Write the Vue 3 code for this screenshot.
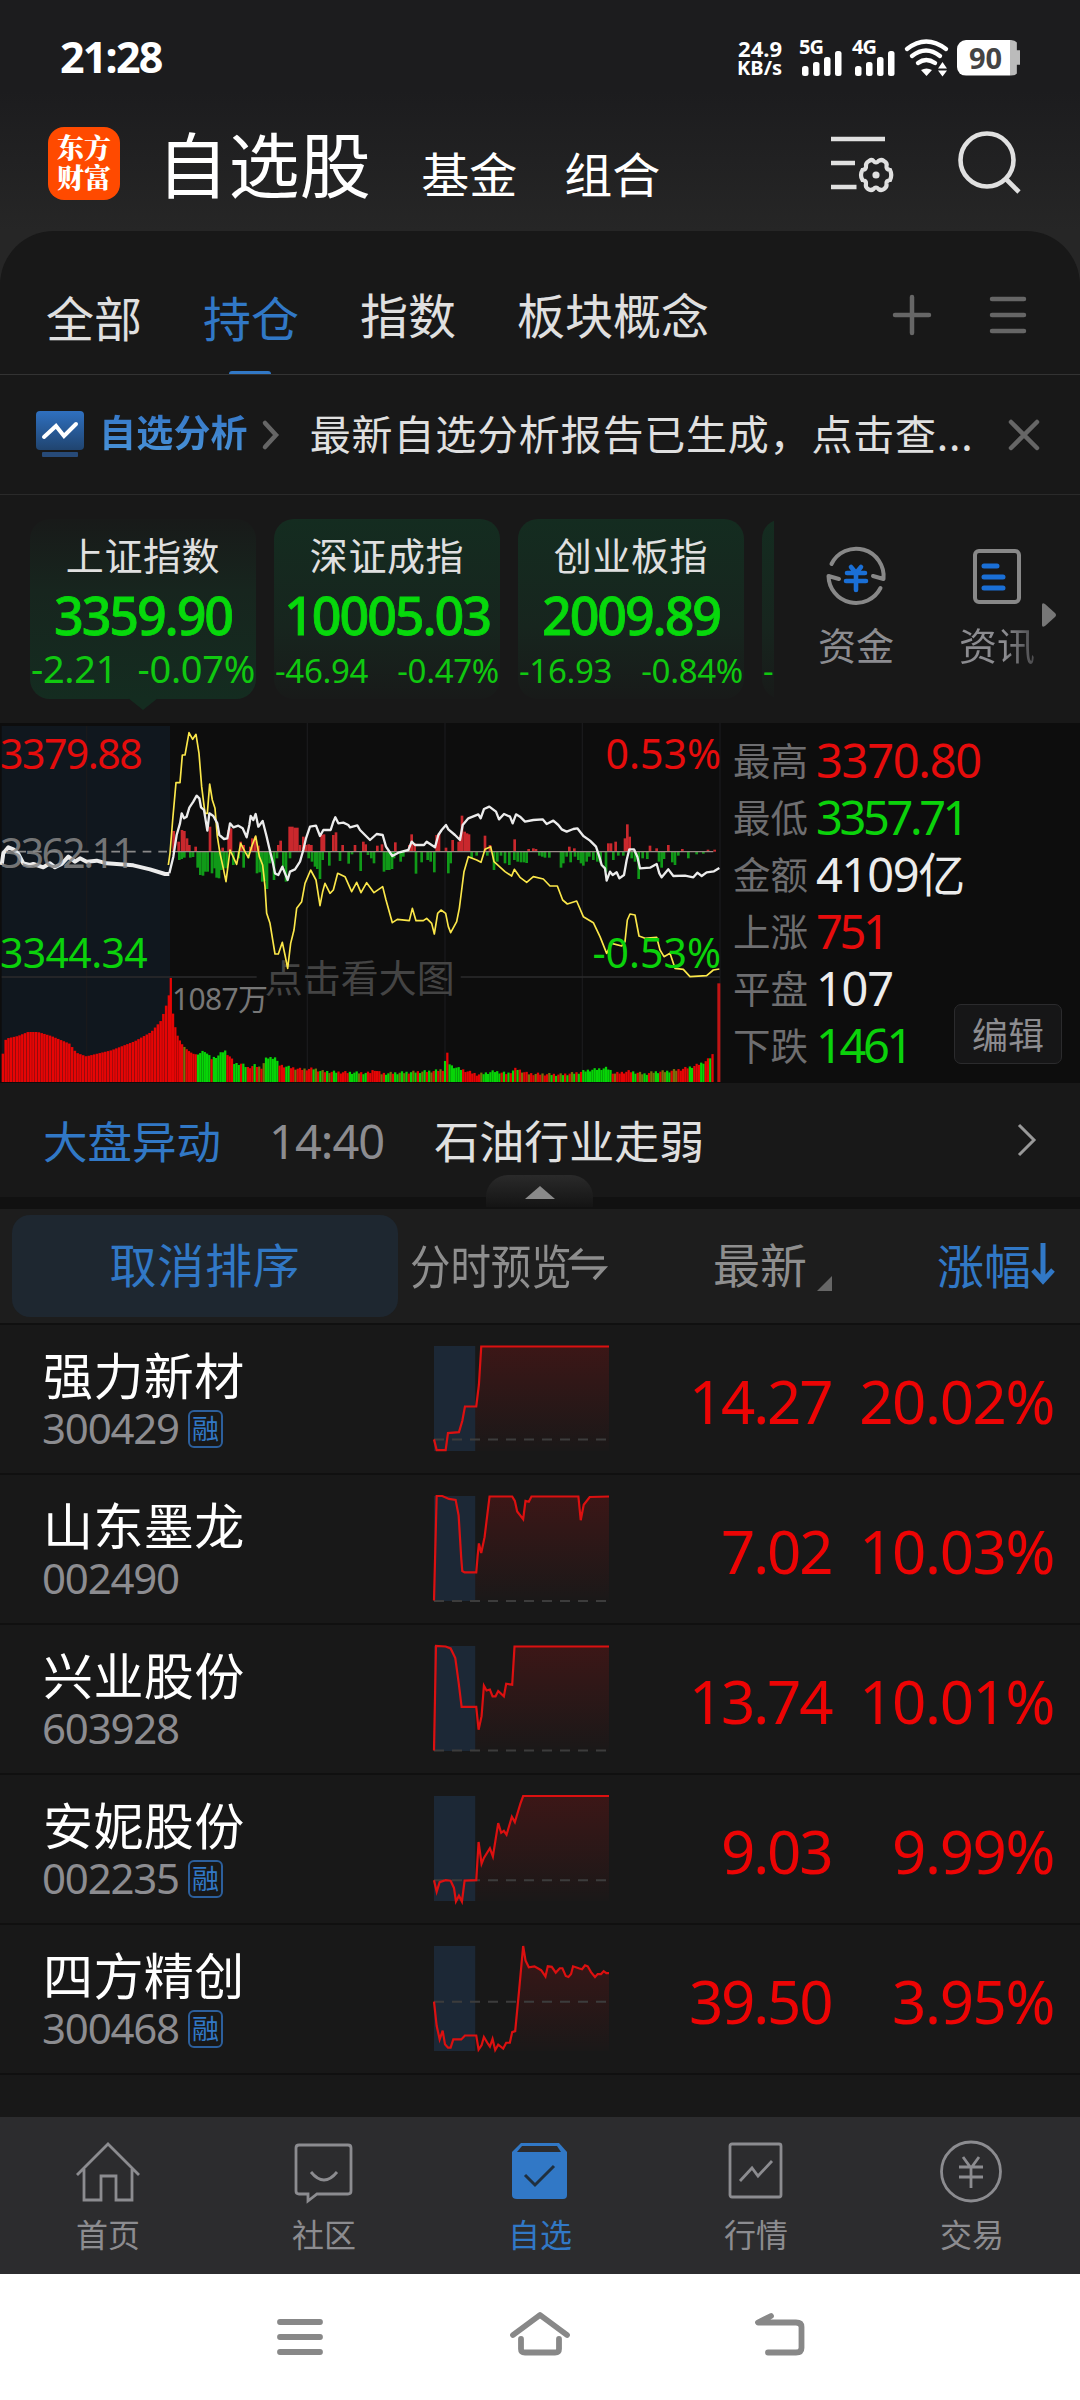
<template>
    <div class="page">
        <div class="top">
            <div class="status">
                <b class="time">21:28</b>
                <div class="speed"><span>24.9</span><span>KB/s</span></div>
                <svg v-for="g in ['5G', '4G']" :key="g" class="signal" width="44" height="38" viewBox="0 0 44 38">
                    <text x="-1" y="15" class="net">{{ g }}</text>
                    <rect x="2" y="27" width="6.5" height="10" rx="2.5" />
                    <rect x="13" y="23" width="6.5" height="14" rx="2.5" />
                    <rect x="24" y="18" width="6.5" height="19" rx="2.5" />
                    <rect x="35" y="12" width="6.5" height="25" rx="2.5" />
                </svg>
                <svg class="wifi" width="46" height="38" viewBox="0 0 46 38">
                    <g fill="none" stroke="#fff" stroke-width="4.4" stroke-linecap="round">
                        <path d="M3 10Q22 -5 42 10" />
                        <path d="M8 17Q22 6 36 17" />
                        <path d="M14 24Q22 18 31 24" />
                    </g>
                    <path d="M17 31Q22.500 28 28 31L22.500 37Z" fill="#fff" />
                    <path d="M34 29.500L38.500 23L43 29.500ZM34 31.500L38.500 37.500L43 31.500Z" fill="#fff" />
                </svg>
                <div class="battery"><b>90</b></div>
            </div>
            <div class="header">
                <div class="logo"><span>东方</span><span>财富</span></div>
                <span class="title">自选股</span>
                <span class="sub">基金</span>
                <span class="sub">组合</span>
                <svg class="setting" width="64" height="60" viewBox="0 0 64 60" fill="none" stroke="#e0e0e0">
                    <path d="M0 5H54M0 29H24M0 53H25.500" stroke-width="4.600" />
                    <path
                        d="M38 27Q41 25 42.500 27Q45 30 47.500 27Q50 25 53 27Q56.500 29 55.500 32Q55 35.500 59 36Q61.500 41 59 46Q55 46.500 55.500 50Q56 53 53 55Q50 57 47.500 55Q45 52 42.500 55Q40 57 37 55Q34 53 35 50Q35.500 46.500 31.500 46Q28.500 41 31.500 36Q35.500 35.500 35 32Q34.500 29 38 27Z"
                        stroke-width="4.200"
                    />
                    <circle cx="45" cy="41" r="3.600" fill="#e0e0e0" stroke="none" />
                </svg>
                <svg class="search" width="64" height="66" viewBox="0 0 64 66" fill="none" stroke="#e0e0e0" stroke-width="4.600">
                    <circle cx="29" cy="30" r="26.500" />
                    <path d="M48 49L61 62" />
                </svg>
            </div>
            <div class="tabs">
                <span
                    v-for="(t, index) in tabs"
                    :key="t"
                    :class="{ on: index == 1, low: index < 2 }"
                    >{{ t }}</span
                >
                <svg class="plus" width="40" height="40" viewBox="0 0 40 40">
                    <path d="M3 20H37M20 2V38" />
                </svg>
                <svg class="lines" width="38" height="38" viewBox="0 0 38 38">
                    <path d="M3 3H35M3 19H35M3 35H35" />
                </svg>
            </div>
        </div>

        <div class="notice">
            <svg width="48" height="48" viewBox="0 0 48 48">
                <defs>
                    <linearGradient id="blue" x1="0" y1="0" x2="0" y2="1">
                        <stop offset="0" stop-color="#2f70c0" />
                        <stop offset="1" stop-color="#20446f" />
                    </linearGradient>
                </defs>
                <rect width="48" height="39" rx="4" fill="url(#blue)" />
                <rect x="6" y="41" width="36" height="5" rx="1" fill="#274a78" />
                <path d="M8 26L20 15L28 25L40 13" fill="none" stroke="#fff" stroke-width="4" stroke-linecap="round" />
            </svg>
            <b>自选分析</b>
            <svg class="arrow" width="18" height="30" viewBox="0 0 18 30">
                <path d="M3 3L14 15L3 27" />
            </svg>
            <p>最新自选分析报告已生成，点击查...</p>
            <svg class="close" width="32" height="32" viewBox="0 0 32 32">
                <path d="M3 3L29 29M29 3L3 29" />
            </svg>
        </div>

        <div class="index">
            <div class="cards">
                <div v-for="(i, index) in indexes" :key="i.name" class="card" :class="{ now: index == 0 }">
                    <span>{{ i.name }}</span>
                    <strong>{{ i.value }}</strong>
                    <div>
                        <em>{{ i.diff }}</em>
                        <em>{{ i.rate }}</em>
                    </div>
                </div>
            </div>
            <div class="entry">
                <svg width="62" height="62" viewBox="0 0 62 62" fill="none" stroke="#888" stroke-width="4" stroke-linecap="round" stroke-linejoin="round">
                    <path d="M6.500 19A27.500 27.500 0 0 1 58.500 34L48 31" />
                    <path d="M55.500 43A27.500 27.500 0 0 1 3.500 31L14 34" />
                    <path d="M26 22L31 28L36 22M22 28H40M21 36H41M31 28V45" stroke="#1a6fd6" stroke-width="4.600" />
                </svg>
                <span>资金</span>
            </div>
            <div class="entry news-entry">
                <svg width="62" height="62" viewBox="0 0 62 62" fill="none" stroke="#888" stroke-width="4" stroke-linecap="round">
                    <rect x="9" y="6" width="44" height="51" rx="4" />
                    <path d="M18 21H31M18 32H37M18 43H37" stroke="#1a6fd6" stroke-width="5" />
                </svg>
                <span>资讯</span>
            </div>
            <svg class="more" width="16" height="26" viewBox="0 0 16 26">
                <path d="M1 3Q1 0 4 2L14 11Q16 13 14 15L4 24Q1 26 1 23Z" fill="#777" />
            </svg>
        </div>

        <div class="market">
            <svg class="chart" width="722" height="360" viewBox="0 39 2166 1080">
                <rect x="5" y="48" width="505" height="1068" fill="#10171e" />
                <g stroke="#19191b" stroke-width="4">
                    <path d="M260 48V1116M922 39V1116M1335 39V1116M1747 39V1116M2160 39V1116" />
                    <path d="M5 801H770M1382 801H2160" stroke="#2b2b2d" />
                </g>
                <path d="M5 425H505" stroke="#8a8a8a" stroke-width="5" stroke-dasharray="26 21" />
                <text x="794" y="846" class="cn" font-size="114" fill="#444">点击看大图</text>
                <rect v-for="b in flow" :key="b.x + b.fill" :x="b.x" :y="b.y" width="8" :height="b.h" :fill="b.fill" />
                <path d="M515 425H2140" stroke="#9a8a88" stroke-width="4" />
                <rect v-for="b in volumes" :key="b.x" :x="b.x" :y="1116 - b.h" :width="b.w" :height="b.h" :fill="b.fill" />
                <polyline :points="yellow" class="yellow" />
                <polyline :points="before" class="before" />
                <polyline :points="white" class="white" />
                <text x="0" y="177" class="tight" fill="#e60c0c">3379.88</text>
                <text x="0" y="473" class="tighter" fill="#868686" fill-opacity="0.850">3362.11</text>
                <text x="0" y="773" class="loose" fill="#0bd20b">3344.34</text>
                <text x="2163" y="177" fill="#e60c0c" text-anchor="end">0.53%</text>
                <text x="2163" y="773" fill="#0bd20b" text-anchor="end">-0.53%</text>
                <text x="516" y="900" class="loose" font-size="90" fill="#777">1087万</text>
            </svg>
            <ul>
                <li v-for="i in stats" :key="i.name">
                    <span>{{ i.name }}</span>
                    <em :class="i.color">{{ i.value }}</em>
                </li>
            </ul>
            <div class="edit">编辑</div>
        </div>

        <div class="news">
            <span class="blue">大盘异动</span>
            <span class="clock">14:40</span>
            <span>石油行业走弱</span>
            <svg width="20" height="36" viewBox="0 0 20 36">
                <path d="M2 3L17 18L2 33" fill="none" stroke="#999" stroke-width="3" />
            </svg>
            <div class="handle"><i></i></div>
        </div>

        <div class="thead">
            <div class="cancel">取消排序</div>
            <div class="preview">
                <span>分时预览</span>
                <svg width="36" height="38" viewBox="0 0 36 38">
                    <path d="M12 4L2 13H34M2 23H34L24 34" fill="none" stroke="#8e8e8e" stroke-width="3.600" />
                </svg>
            </div>
            <div class="latest">最新<i></i></div>
            <div class="rate">
                涨幅
                <svg width="24" height="42" viewBox="0 0 24 42">
                    <path d="M12 0V38M2 27L12 38L22 27" fill="none" stroke="#3178c6" stroke-width="5" />
                </svg>
            </div>
        </div>

        <ul class="list">
            <li v-for="s in stocks" :key="s.code">
                <div class="name">
                    <p>{{ s.name }}</p>
                    <div>
                        <span>{{ s.code }}</span>
                        <i v-if="s.margin">融</i>
                    </div>
                </div>
                <svg class="spark" width="175" height="105" viewBox="0 0 526 217" preserveAspectRatio="none">
                    <defs>
                        <linearGradient id="red" gradientUnits="userSpaceOnUse" x1="0" y1="0" x2="0" y2="217">
                            <stop offset="0" stop-color="#e01010" stop-opacity="0.180" />
                            <stop offset="1" stop-color="#e01010" stop-opacity="0.010" />
                        </linearGradient>
                    </defs>
                    <polygon :points="s.line + ' 526,217 0,217'" fill="url(#red)" />
                    <rect width="124" height="217" fill="#1c2836" />
                    <path :d="`M0 ${s.base}H526`" class="dash" />
                    <polyline :points="s.line" class="line" />
                </svg>
                <span class="price">{{ s.price }}</span>
                <span class="percent">{{ s.rate }}</span>
            </li>
        </ul>

        <div class="nav">
            <div>
                <svg width="66" height="66" viewBox="0 0 66 66">
                    <path d="M2 36L33 5L64 36M9 30V61H26V37H41V61H57V30" />
                </svg>
                <span>首页</span>
            </div>
            <div>
                <svg width="66" height="66" viewBox="0 0 66 66">
                    <path d="M8 6H57Q60 6 60 9V52Q60 55 57 55H26L17 62V55H8Q5 55 5 52V9Q5 6 8 6Z" />
                    <path d="M20 33Q33 49 46 33" />
                </svg>
                <span>社区</span>
            </div>
            <div class="on">
                <svg width="66" height="66" viewBox="0 0 66 66">
                    <path d="M14 4H52L60 13V56Q60 60 56 60H10Q5 60 5 56V13Z" fill="#3178c6" stroke="none" />
                    <path d="M15 7H50L54 13H10Z" fill="#2c2c2e" stroke="none" />
                    <path d="M18 36L28 46L47 27" stroke="#20303f" stroke-width="3" />
                </svg>
                <span>自选</span>
            </div>
            <div>
                <svg width="66" height="66" viewBox="0 0 66 66">
                    <rect x="7" y="5" width="51" height="53" rx="2" />
                    <path d="M17 42L29 29L35 37L49 22" />
                </svg>
                <span>行情</span>
            </div>
            <div>
                <svg width="66" height="66" viewBox="0 0 66 66">
                    <circle cx="32" cy="32.500" r="29.500" />
                    <path d="M24 18L32 29L40 18M20 28H44M20 38H44M32 28V49" />
                </svg>
                <span>交易</span>
            </div>
        </div>

        <div class="system">
            <svg width="60" height="48" viewBox="0 0 60 48">
                <path d="M10 11H50M10 26H50M10 41H50" />
            </svg>
            <svg width="64" height="48" viewBox="0 0 64 48">
                <path d="M5 24L32 4L59 24" />
                <path d="M13 28V38Q13 41.500 17 41.500H47Q51 41.500 51 38V28" />
            </svg>
            <svg width="60" height="48" viewBox="0 0 60 48">
                <path d="M21 5L8 11.500H46Q51.500 11.500 51.500 16V37Q51.500 41.500 46 41.500H18" />
            </svg>
        </div>
    </div>
</template>

<script setup>
import { ref } from "vue";

let tabs = ref(["全部", "持仓", "指数", "板块概念"]);
let indexes = ref([
    { name: "上证指数", value: "3359.90", diff: "-2.21", rate: "-0.07%" },
    { name: "深证成指", value: "10005.03", diff: "-46.94", rate: "-0.47%" },
    { name: "创业板指", value: "2009.89", diff: "-16.93", rate: "-0.84%" },
    { name: "", value: "", diff: "-", rate: "" },
]);
let stats = ref([
    { name: "最高", value: "3370.80", color: "up" },
    { name: "最低", value: "3357.71", color: "down narrow" },
    { name: "金额", value: "4109亿", color: "" },
    { name: "上涨", value: "751", color: "up narrow" },
    { name: "平盘", value: "107", color: "" },
    { name: "下跌", value: "1461", color: "down narrow" },
]);

let stocks = ref([
    {
        name: "强力新材",
        code: "300429",
        margin: true,
        price: "14.27",
        rate: "20.02%",
        base: 193,
        line: "0,193 8,215 35,215 42,180 75,178 85,155 93,125 127,125 135,80 142,1 526,1",
    },
    {
        name: "山东墨龙",
        code: "002490",
        margin: false,
        price: "7.02",
        rate: "10.03%",
        base: 217,
        line: "0,216 8,0 25,0 45,6 65,8 74,40 82,130 85,155 92,158 127,158 131,125 135,98 142,118 152,85 160,40 167,1 235,1 243,10 250,32 268,48 275,10 285,12 293,1 434,1 441,50 450,18 468,2 526,1",
    },
    {
        name: "兴业股份",
        code: "603928",
        margin: false,
        price: "13.74",
        rate: "10.01%",
        base: 216,
        line: "0,216 6,0 35,1 50,5 64,25 74,75 83,126 127,126 134,173 143,145 150,82 158,92 168,90 176,104 185,104 193,93 210,104 217,78 235,80 242,1 526,1",
    },
    {
        name: "安妮股份",
        code: "002235",
        margin: true,
        price: "9.03",
        rate: "9.99%",
        base: 174,
        line: "0,174 8,198 17,178 35,174 50,175 60,190 66,218 75,206 84,218 92,175 127,174 134,95 143,140 150,128 168,108 177,125 193,56 202,76 210,72 218,80 234,43 243,54 260,15 268,0 526,0",
    },
    {
        name: "四方精创",
        code: "300468",
        margin: true,
        price: "39.50",
        rate: "3.95%",
        base: 115,
        line: "0,115 8,165 17,193 26,175 33,203 42,210 50,210 58,193 82,193 93,185 127,185 134,214 143,205 150,188 162,202 168,208 176,192 184,215 193,204 208,212 217,200 228,200 235,178 244,176 256,90 268,0 275,30 285,44 302,42 322,50 335,63 342,42 354,43 366,55 378,46 386,46 396,62 404,64 412,58 418,42 435,46 445,48 454,40 462,42 472,54 484,64 492,58 502,58 510,52 518,56 526,56",
    },
]);

// 盘前
let before =
    "5,465 10,430 25,412 40,418 55,432 70,460 90,465 100,462 130,472 150,460 165,472 185,462 205,440 225,455 240,445 260,455 290,452 320,460 400,466 450,478 495,492 508,492";
let white =
    "508,490 520,440 530,375 540,340 545,310 552,325 560,320 568,293 580,275 590,257 598,265 603,292 612,300 622,362 628,310 640,318 652,340 658,375 672,387 682,385 690,340 700,352 715,347 728,355 740,382 748,345 752,318 760,330 767,312 775,350 788,333 800,380 808,415 818,455 825,490 835,495 847,470 855,490 863,510 870,485 885,478 900,455 910,420 918,385 930,350 948,347 960,378 970,360 992,360 1000,335 1006,322 1015,340 1030,338 1045,345 1050,352 1072,346 1080,360 1095,375 1110,390 1130,372 1148,375 1158,410 1177,438 1195,428 1225,420 1235,395 1245,405 1272,405 1280,395 1305,412 1315,375 1325,360 1338,345 1345,358 1365,375 1380,390 1388,345 1405,325 1435,313 1442,325 1452,297 1468,290 1488,305 1497,328 1512,312 1530,320 1538,340 1548,313 1560,320 1575,335 1600,330 1628,328 1640,342 1660,332 1675,345 1685,358 1700,365 1720,357 1732,355 1750,378 1770,392 1788,410 1798,440 1805,465 1815,475 1820,512 1830,485 1838,495 1850,487 1858,505 1872,495 1880,450 1888,418 1902,418 1912,440 1920,475 1950,473 1970,462 1978,490 1985,502 2005,478 2020,498 2055,497 2080,502 2092,488 2105,498 2120,487 2142,484 2158,474";
let yellow =
    "505,465 510,430 518,330 528,218 540,218 547,135 555,135 567,68 578,88 588,73 597,130 605,230 615,310 622,310 629,222 637,270 645,295 652,380 660,430 670,475 678,515 690,420 710,463 722,400 735,425 745,443 755,410 767,378 778,440 788,465 795,530 800,610 810,640 825,732 835,732 847,697 855,735 863,775 872,700 882,660 890,595 905,575 915,520 932,480 948,510 960,587 968,545 975,520 990,550 1000,540 1013,490 1035,500 1055,545 1070,517 1083,548 1100,518 1122,548 1148,530 1158,570 1177,638 1192,628 1228,632 1237,595 1248,632 1270,632 1280,625 1295,640 1303,672 1313,610 1323,600 1337,610 1345,650 1352,668 1370,635 1378,595 1385,540 1392,485 1405,440 1430,450 1443,457 1455,418 1472,410 1482,455 1515,485 1535,498 1543,478 1560,502 1580,517 1600,500 1630,507 1650,528 1672,528 1688,570 1702,582 1730,573 1750,620 1780,638 1800,680 1820,730 1835,700 1865,708 1875,695 1882,630 1890,612 1905,615 1917,678 1935,685 1970,682 1980,720 1992,740 2010,730 2025,775 2050,778 2070,800 2120,797 2140,780 2158,777";

// 红绿柱 [x, 高度]
let ups = [
    [517, 62], [532, 30], [542, 65], [549, 62], [557, 40], [564, 20], [583, 15], [626, 75], [664, 12], [682, 65], [689, 70], [718, 30], [727, 20], [747, 15], [753, 40], [762, 45], [771, 18], [831, 20], [838, 33], [865, 75], [873, 75], [880, 72], [888, 72], [896, 20], [906, 45], [914, 20], [922, 22], [930, 20], [961, 50], [968, 52], [996, 50], [1004, 58], [1024, 20], [1061, 20], [1086, 30], [1093, 22],
    [1128, 18], [1142, 22], [1182, 28], [1224, 20], [1231, 52], [1240, 25], [1306, 50], [1313, 55], [1334, 12], [1354, 35], [1372, 30], [1378, 50], [1382, 108], [1390, 60], [1397, 55], [1403, 52], [1451, 48], [1466, 20], [1540, 37], [1582, 8], [1596, 10], [1604, 8], [1704, 15], [1719, 10], [1821, 25], [1829, 25], [1843, 30], [1871, 40], [1878, 82], [1885, 45], [1946, 18], [1966, 10], [2001, 20], [2043, 8], [2120, 6], [2140, 6],
];
let downs = [
    [534, 25], [541, 22], [549, 18], [567, 18], [575, 16], [589, 48], [597, 70], [605, 72], [612, 60], [619, 60], [632, 65], [640, 50], [646, 78], [653, 80], [660, 55], [668, 50], [676, 50], [696, 40], [712, 20], [727, 48], [741, 20], [767, 65], [775, 62], [783, 90], [790, 88], [797, 112], [805, 35], [818, 85], [827, 20], [846, 45], [854, 90], [866, 20], [922, 20], [932, 30], [941, 45], [948, 52], [956, 82], [964, 25], [984, 42], [1016, 28], [1042, 36], [1052, 8], [1078, 58], [1100, 10], [1110, 20], [1118, 35],
    [1148, 60], [1156, 55], [1164, 55], [1172, 52], [1178, 20], [1198, 30], [1206, 15], [1244, 66], [1261, 32], [1279, 25], [1288, 30], [1299, 62], [1341, 65], [1348, 35], [1411, 20], [1426, 12], [1458, 12], [1478, 55], [1488, 30], [1499, 12], [1511, 35], [1524, 40], [1539, 25], [1549, 30], [1559, 32], [1568, 32], [1576, 34], [1614, 12], [1623, 15], [1631, 18], [1644, 18], [1679, 48], [1686, 35], [1696, 15], [1708, 32], [1721, 15], [1731, 25], [1739, 35], [1746, 42], [1756, 30], [1764, 15], [1776, 25], [1788, 30], [1798, 35], [1814, 60], [1836, 25], [1851, 12], [1866, 12], [1891, 20], [1901, 30], [1912, 82], [1924, 20], [1938, 22], [1973, 30], [1981, 48], [1988, 22], [2013, 32], [2021, 40], [2031, 12], [2061, 20], [2086, 8], [2106, 6],
];
let flow = [
    ...ups.map(([x, h]) => ({ x, h, y: 425 - h, fill: "#c9282d" })),
    ...downs.map(([x, h]) => ({ x, h, y: 425, fill: "#109a18" })),
];

// 成交量轮廓
let shape = [
    [5, 85], [14, 130], [50, 138], [80, 150], [110, 150], [150, 138], [205, 115], [225, 88], [255, 77], [330, 95], [400, 122], [450, 150], [480, 185], [495, 230], [503, 260], [509, 312], [515, 210], [525, 150], [533, 130], [545, 110], [560, 95], [575, 85], [590, 82], [610, 95], [630, 70], [650, 78], [670, 95], [685, 78], [700, 55], [720, 55], [740, 43], [760, 50], [780, 42], [796, 72], [822, 74], [832, 52], [860, 45], [900, 38], [940, 40], [960, 32], [1000, 30], [1060, 28],
    [1105, 27], [1120, 38], [1140, 25], [1300, 33], [1328, 38], [1335, 84], [1342, 84], [1346, 50], [1380, 38], [1430, 22], [1480, 32], [1520, 25], [1545, 40], [1580, 25], [1680, 22], [1730, 28], [1760, 35], [1818, 42], [1840, 25], [1885, 32], [1930, 24], [1960, 30], [2000, 32], [2040, 38], [2080, 48], [2110, 60], [2125, 70], [2136, 84],
];
let heightAt = (x) => {
    let n = shape.findIndex((p) => p[0] >= x);
    if (n < 1) return shape[0][1];
    let [x0, y0] = shape[n - 1];
    let [x1, y1] = shape[n];
    return y0 + ((y1 - y0) * (x - x0)) / (x1 - x0);
};
// 颜色分段 [结束x, 颜色]，o 为红绿各半
let runs = [
    [545, "r"], [555, "o"], [588, "r"], [625, "g"], [632, "r"], [678, "g"], [694, "r"], [714, "g"], [722, "r"], [740, "g"], [755, "r"], [764, "g"], [790, "ro"], [830, "g"], [850, "r"], [865, "g"], [930, "rrro"], [1000, "gor"], [1012, "g"], [1044, "r"], [1056, "g"], [1100, "rggo"], [1135, "rr"], [1200, "gorg"], [1290, "grgo"], [1332, "rgro"], [1343, "r"], [1382, "g"], [1435, "r"], [1450, "go"], [1495, "g"], [1538, "rg"], [1560, "rg"], [1640, "rro"], [1740, "grogr"], [1822, "g"], [1850, "orgr"], [1895, "r"], [2030, "groog"], [2060, "r"], [2078, "g"], [2095, "r"], [2110, "g"], [2122, "r"], [2130, "g"], [2140, "r"],
];
let fills = { r: "#e60505", g: "#07d407", o: "#79700a" };
let volumes = [];
for (let x = 5; x < 505; x += 8.3) {
    volumes.push({ x, w: 7.6, h: heightAt(x), fill: "#e60505" });
}
for (let x = 509, n = 0; x < 2138; x += 6.8, n++) {
    let jitter = x > 600 ? ((n * 7) % 5) * 2 - 4 : 0;
    let run = runs.find((r) => x < r[0]) || runs[runs.length - 1];
    volumes.push({ x, w: 6.8, h: heightAt(x) + jitter, fill: fills[run[1][n % run[1].length]] });
}
volumes.push({ x: 2152, w: 9, h: 296, fill: "#c01414" });
</script>

<style>
body {
    background: #181818;
}
</style>

<style scoped>
* {
    box-sizing: border-box;
}
p,
ul {
    margin: 0;
    padding: 0;
}
li {
    list-style: none;
}
em,
i {
    font-style: normal;
}
svg {
    display: block;
    flex-shrink: 0;
    overflow: visible;
}
.page {
    width: 1080px;
    height: 2400px;
    overflow: hidden;
    display: flex;
    flex-direction: column;
    background: #181818;
    color: #e0e0e0;
    font-family: "Noto Sans CJK SC", sans-serif;
    white-space: nowrap;
}
.page > div,
.page > ul {
    flex-shrink: 0;
}
.status,
.chart,
.card strong,
.card div,
.market em,
.clock,
.name span,
.price,
.percent {
    font-family: "Noto Sans", "Noto Sans CJK SC", sans-serif;
}
.top {
    background: linear-gradient(#1c1c1e 90px, #262626 230px);
}
.status {
    height: 115px;
    padding: 0 60px 0 60px;
    display: flex;
    align-items: center;
    color: #fff;
}
.time {
    margin-right: auto;
    font-size: 43px;
    line-height: 60px;
    letter-spacing: -1.8px;
    padding-bottom: 2px;
}
.speed {
    width: 48px;
    display: flex;
    flex-direction: column;
    align-items: flex-end;
    font-size: 20px;
    line-height: 20px;
    font-weight: bold;
}
.speed span:nth-of-type(1) {
    font-size: 22px;
}
.signal {
    margin-left: 15px;
    margin-right: -6px;
    fill: #fff;
}
.speed + .signal {
    margin-left: 18px;
}
.net {
    font-size: 20px;
    font-weight: bold;
    letter-spacing: -1px;
}
.wifi {
    margin-left: 13px;
}
.battery {
    width: 63px;
    height: 36px;
    margin-left: 7px;
    padding-right: 6px;
    border-radius: 9px;
    background: linear-gradient(90deg, #fff 53px, #bbb 53px);
    display: flex;
    align-items: center;
    justify-content: center;
    color: #444;
    font-size: 29px;
    line-height: 30px;
    clip-path: polygon(0 0, 95% 0, 95% 30%, 100% 30%, 100% 70%, 95% 70%, 95% 100%, 0 100%);
}
.header {
    height: 116px;
    padding: 0 58px 0 48px;
    display: flex;
    align-items: flex-start;
    color: #fff;
}
.logo {
    width: 72px;
    height: 73px;
    margin-top: 12px;
    border-radius: 16px;
    background: #ff4a00;
    display: flex;
    flex-direction: column;
    justify-content: center;
    text-align: center;
    font-size: 27px;
    line-height: 30px;
    font-weight: 900;
    font-family: "Noto Serif CJK SC", "Noto Sans CJK SC", sans-serif;
    padding-bottom: 3px;
}
.title {
    margin-left: 37px;
    font-size: 71px;
    line-height: 92px;
    letter-spacing: 0.4px;
}
.sub {
    margin-left: 50px;
    font-size: 48px;
    line-height: 60px;
    margin-top: 27px;
}
.sub + .sub {
    margin-left: 47px;
}
.setting {
    margin-left: auto;
    margin-top: 19px;
}
.search {
    margin-left: 63px;
    margin-top: 15px;
}
.tabs {
    height: 144px;
    padding-left: 46px;
    border-radius: 54px 54px 0 0;
    border-bottom: 1px solid #333;
    background: #181818;
    display: flex;
    align-items: flex-start;
    font-size: 48px;
    line-height: 64px;
}
.tabs span {
    margin-right: 61px;
    margin-top: 50px;
    position: relative;
}
.tabs .low {
    margin-top: 53px;
}
.tabs .on {
    color: #3178c6;
}
.tabs .on::after {
    content: "";
    position: absolute;
    left: 26px;
    top: 87px;
    width: 42px;
    height: 3px;
    border-radius: 3px 3px 0 0;
    background: #3178c6;
}
.plus,
.lines,
.arrow,
.close {
    fill: none;
    stroke: #666;
    stroke-width: 4.5;
    stroke-linecap: round;
}
.plus {
    margin: 64px 0 0 auto;
}
.lines {
    margin: 65px 53px 0 57px;
}
.notice {
    height: 120px;
    padding: 0 40px 0 36px;
    display: flex;
    align-items: center;
    border-bottom: 1px solid #2a2a2a;
}
.notice b {
    margin: -7px 0 0 15px;
    font-size: 37px;
    letter-spacing: 0.2px;
    line-height: 50px;
    background: linear-gradient(#3374c6, #4a94d8);
    background-clip: text;
    color: transparent;
}
.arrow {
    margin-left: 14px;
}
.notice p {
    margin: -5px 0 0 30px;
    font-size: 41px;
    letter-spacing: 0.8px;
    line-height: 60px;
}
.close {
    margin-left: auto;
}
.index {
    height: 228px;
    padding: 24px 24px 0 30px;
    display: flex;
}
.cards {
    width: 744px;
    display: flex;
    gap: 18px;
    overflow: hidden;
}
.card {
    width: 226px;
    height: 180px;
    flex-shrink: 0;
    border-radius: 20px;
    background: linear-gradient(#142c20, #17251e 60%, #181a19);
    display: flex;
    flex-direction: column;
    align-items: center;
    position: relative;
}
.now {
    background: linear-gradient(#181a19, #17251e 40%, #142c20);
}
.now::after {
    content: "";
    position: absolute;
    left: 98px;
    top: 179px;
    border: 15px solid transparent;
    border-top: 12px solid #142c20;
    border-bottom: 0;
}
.card span {
    height: 72px;
    font-size: 38px;
    letter-spacing: 0.6px;
    line-height: 70px;
}
.card strong {
    height: 52px;
    font-size: 52px;
    line-height: 47px;
    font-weight: 500;
    color: #07d80c;
    letter-spacing: -2.1px;
    -webkit-text-stroke: 0.8px #07d80c;
}
.card div {
    width: 100%;
    padding: 0 1px 0 1px;
    display: flex;
    justify-content: space-between;
    color: #10c810;
    font-size: 33px;
    line-height: 55px;
    letter-spacing: -0.3px;
}
.now div {
    font-size: 38px;
    line-height: 50px;
}
.entry {
    width: 90px;
    margin-left: 37px;
    padding-top: 26px;
    display: flex;
    flex-direction: column;
    align-items: center;
    color: #8c8c90;
    font-size: 38px;
    line-height: 50px;
}
.entry span {
    margin-top: 12px;
}
.news-entry {
    margin-left: 51px;
}
.news-entry span {
    background: linear-gradient(90deg, #8c8c90 60%, #48484a);
    background-clip: text;
    color: transparent;
}
.more {
    margin: 83px -18px 0 -1px;
}
.market {
    height: 360px;
    background: #0d0d0d;
    display: flex;
    position: relative;
}
.chart {
    font-size: 123px;
}
.chart .tight {
    letter-spacing: -4.5px;
}
.chart .tighter {
    letter-spacing: -8px;
}
.chart .loose {
    letter-spacing: -2px;
}
.chart .cn {
    font-family: "Noto Sans CJK SC", sans-serif;
}
.chart polyline {
    fill: none;
    stroke-linejoin: round;
}
.yellow {
    stroke: #fbe74a;
    stroke-width: 5;
}
.before {
    stroke: #ececec;
    stroke-width: 12;
}
.white {
    stroke: #ececec;
    stroke-width: 7;
}
.market ul {
    padding: 7px 0 0 11px;
}
.market li {
    height: 57px;
    display: flex;
    align-items: center;
    color: #6e6e70;
    font-size: 37.5px;
    line-height: 57px;
}
.market em {
    margin-left: 8px;
    padding-top: 3px;
    font-size: 47px;
    letter-spacing: -1.3px;
    color: #ececec;
}
.market .up {
    color: #e60c0c;
}
.market .down {
    color: #0bd20b;
}
.market .narrow {
    letter-spacing: -3.4px;
}
.edit {
    position: absolute;
    right: 18px;
    bottom: 19px;
    width: 108px;
    height: 60px;
    border: 1px solid #2b2b2d;
    border-radius: 7px;
    background: #161617;
    text-align: center;
    color: #8c8c90;
    font-size: 36px;
    line-height: 57px;
}
.news {
    height: 126px;
    padding: 0 43px 0 43px;
    border-bottom: 12px solid #111;
    display: flex;
    align-items: center;
    position: relative;
    font-size: 45px;
    line-height: 60px;
}
.blue {
    color: #3178c6;
    font-size: 44.5px;
}
.clock {
    margin: 2px 50px 0 48px;
    font-size: 47px;
    color: #8c8c90;
    letter-spacing: -1px;
}
.news svg {
    margin-left: auto;
}
.handle {
    position: absolute;
    left: 486px;
    bottom: -10px;
    width: 107px;
    height: 32px;
    border-radius: 22px 22px 0 0;
    background: linear-gradient(#2a2a2a, #141414);
}
.handle i {
    position: absolute;
    left: 39px;
    top: 11px;
    border: 15px solid transparent;
    border-bottom: 13px solid #8a8a8a;
    border-top: 0;
}
.thead {
    height: 114px;
    padding: 6px 24px 0 12px;
    background: #1d1d1d;
    display: flex;
    font-size: 47px;
    line-height: 95px;
    color: #8e8e8e;
}
.cancel {
    width: 386px;
    height: 102px;
    border-radius: 18px;
    background: #1e2730;
    text-align: center;
    color: #3178c6;
    letter-spacing: 0.8px;
}
.preview {
    width: 196px;
    margin-left: 12px;
    display: flex;
    align-items: center;
    height: 97px;
}
.preview span {
    width: 160px;
    transform: scaleX(0.86);
    transform-origin: left;
}
.latest {
    width: 120px;
    margin-left: 107px;
    position: relative;
}
.latest i {
    position: absolute;
    left: 104px;
    top: 61px;
    border-left: 15px solid transparent;
    border-bottom: 15px solid #666;
}
.rate {
    margin-left: auto;
    height: 97px;
    display: flex;
    align-items: center;
    color: #3178c6;
}
.rate svg {
    margin-right: 1px;
}
.list {
    height: 794px;
}
.list li {
    height: 150px;
    padding-right: 26px;
    border-top: 2px solid #101010;
    display: flex;
    align-items: flex-start;
}
.list li:last-child {
    border-bottom: 2px solid #101010;
    height: 152px;
}
.name {
    width: 391px;
    padding-left: 43px;
}
.name p {
    margin-top: 15px;
    height: 66px;
    font-size: 50px;
    letter-spacing: 0.4px;
    line-height: 66px;
    color: #fff;
}
.name div {
    display: flex;
    align-items: center;
    height: 45px;
    color: #8c8c90;
    font-size: 42px;
}
.name span {
    line-height: 38px;
    margin-top: -1px;
    margin-left: -1px;
    letter-spacing: -1.2px;
}
.name i {
    width: 35px;
    height: 38px;
    margin-left: 9px;
    border: 2px solid #2c5f9c;
    border-radius: 6px;
    text-align: center;
    color: #3178c6;
    font-size: 27px;
    line-height: 31px;
}
.spark {
    margin: 21px 0 0 43px;
}
.line {
    fill: none;
    stroke: #dc1010;
    stroke-width: 2.2;
    vector-effect: non-scaling-stroke;
}
.dash {
    stroke: #3c3c3c;
    stroke-width: 2;
    stroke-dasharray: 10 8;
    vector-effect: non-scaling-stroke;
}
.price,
.percent {
    margin-top: 38px;
    width: 223px;
    text-align: right;
    font-size: 60px;
    line-height: 76px;
    letter-spacing: -2.2px;
    color: #ec0404;
}
.percent {
    letter-spacing: -1.4px;
}
.nav {
    height: 157px;
    background: #2c2c2e;
    display: flex;
    color: #8c8c90;
}
.nav div {
    flex: 1;
    padding-top: 22px;
    display: flex;
    flex-direction: column;
    align-items: center;
    font-size: 32px;
    line-height: 46px;
}
.nav svg {
    fill: none;
    stroke: #8c8c90;
    stroke-width: 2.8;
}
.nav span {
    margin-top: 5px;
}
.nav .on {
    color: #3178c6;
}
.system {
    height: 126px;
    padding-top: 37px;
    background: #fff;
    display: flex;
    justify-content: center;
    gap: 178px;
}
.system svg {
    fill: none;
    stroke: #888;
    stroke-width: 5.8;
    stroke-linecap: round;
    stroke-linejoin: round;
}
</style>
